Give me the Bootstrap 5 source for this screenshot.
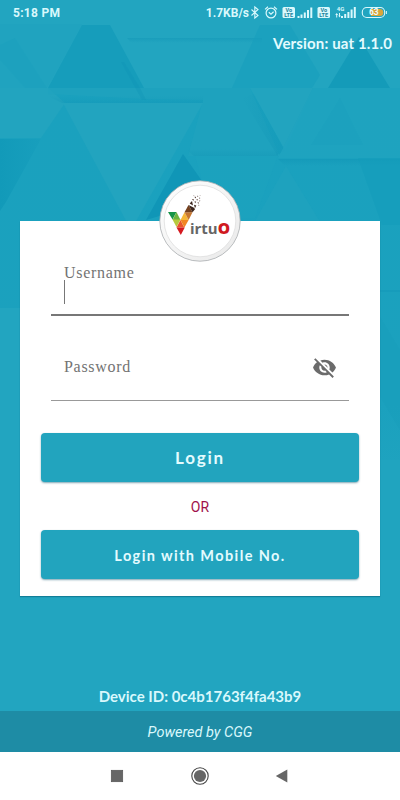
<!DOCTYPE html>
<html lang="en">
<head>
  <meta charset="UTF-8">
  <meta name="viewport" content="width=device-width, initial-scale=1">
  <title>VirtuO - Login</title>
  <link href="https://cdn.jsdelivr.net/npm/bootstrap@5.3.3/dist/css/bootstrap.min.css" rel="stylesheet">
  <style>
    body {
      font-family: Lato, "Open Sans", sans-serif;
      background: #23a5c0;
    }
    .screen {
      width: 400px;
      height: 800px;
      background: #22a5c0;
    }
    .backdrop { z-index: 0; }
    .screen > :not(.backdrop) { z-index: 1; }
    .statusbar {
      height: 25px;
      padding: 0 12px 0 13px;
      font: 700 12px/26px Roboto, sans-serif;
      color: #d9f8fc;
    }
    .clock { letter-spacing: .3px; }
    .net-speed { margin-right: -1px; letter-spacing: 0; }
    .status-icons { width: 140px; height: 25px; }
    .version {
      height: 37px;
      padding-right: 8px;
      font-size: 15px;
      font-weight: 700;
      line-height: 37px;
      color: #e4fbfe;
    }
    .version span { letter-spacing: .15px; }
    .login-card {
      margin: 159px 20px 0;
      width: 360px;
      height: 375px;
      padding: 38px 21px 0 21px;
      box-shadow: 0 1px 1px rgba(0, 80, 105, .45);
    }
    .logo {
      width: 84px;
      height: 84px;
      top: -42px;
      left: 138px;
    }
    .field {
      margin: 0 10px;
      padding: 0 12px 0 13px;
      color: #737373;
      font-family: "Liberation Serif", serif;
      font-size: 16px;
    }
    .field-user {
      height: 57px;
      border-bottom: 2px solid #777;
    }
    .field-user label {
      display: block;
      height: 21px;
      line-height: 28px;
      letter-spacing: .7px;
    }
    .caret {
      width: 1px;
      height: 24px;
      background: #777;
    }
    .field-pass {
      height: 85px;
      padding-top: 19px;
      border-bottom: 1px solid #999;
    }
    .field-pass label {
      margin-top: -2px;
      letter-spacing: .7px;
    }
    .eye { width: 25px; height: 25px; }
    .btn-login {
      height: 49px;
      padding: 0;
      border: 0;
      border-radius: 4px;
      background: #22a4be;
      color: #e4fbfe;
      font-size: 17px;
      font-weight: 700;
      letter-spacing: 1.8px;
      box-shadow: 0 1px 2px rgba(0, 80, 105, .5);
    }
    .btn-login:hover { background: #1f97af; color: #fff; }
    .btn-mobile { padding-top: 2px; font-size: 14.5px; letter-spacing: 1.4px; }
    .or-text {
      height: 48px;
      line-height: 51px;
      font-family: Roboto, sans-serif;
      font-size: 14px;
      color: #a0114b;
    }
    .device {
      height: 29px;
      font-size: 15px;
      font-weight: 700;
      line-height: 29px;
      color: #d9f8fc;
    }
    .powered {
      height: 41px;
      line-height: 43px;
      background: #1e8ca5;
      color: #d9f8fc;
      font-family: Roboto, sans-serif;
      font-size: 14.5px;
    }
    .sysnav { height: 48px; }
  </style>
</head>
<body>

  <main class="screen d-flex flex-column position-relative overflow-hidden">

    <!-- Triangle pattern -->
    <svg class="backdrop position-absolute top-0 start-0" width="400" height="800" viewBox="0 0 400 800" aria-hidden="true">
      <defs>
        <linearGradient id="fadeDown" x1="0" y1="0" x2="0" y2="1">
          <stop offset="0" stop-color="#1aa1be"/>
          <stop offset=".7" stop-color="#1ba1be"/>
          <stop offset="1" stop-color="#22a5c0"/>
        </linearGradient>
        <linearGradient id="shade" x1="0" y1="0" x2="0" y2="1">
          <stop offset="0" stop-color="#0b8fb2" stop-opacity=".35"/>
          <stop offset="1" stop-color="#0b8fb2" stop-opacity="0"/>
        </linearGradient>
        <linearGradient id="shadeUp" x1="0" y1="1" x2="0" y2="0">
          <stop offset="0" stop-color="#0b8fb2" stop-opacity=".25"/>
          <stop offset="1" stop-color="#0b8fb2" stop-opacity="0"/>
        </linearGradient>
        <linearGradient id="shadeSide" x1="1" y1="0" x2="0" y2="0">
          <stop offset="0" stop-color="#0b8fb2" stop-opacity=".3"/>
          <stop offset="1" stop-color="#0b8fb2" stop-opacity="0"/>
        </linearGradient>
        <linearGradient id="darkLeft" x1="0" y1="0" x2="1" y2="0">
          <stop offset="0" stop-color="#129ab9"/>
          <stop offset="1" stop-color="#189fbd"/>
        </linearGradient>
      </defs>
      <path d="M0 88H400V540L340 460H0Z" fill="url(#fadeDown)"/>
      <path d="M0 24H82L47 88H0Z" fill="#20a3bf"/>
      <path d="M15 38L47 88H25L0 60V45Z" fill="#189fbd" opacity=".3"/>
      <path d="M82 25H110L144 88H48Z" fill="#169dbb"/>
      <path d="M127 38H262V43H131Z" fill="url(#shade)"/>
      <path d="M260 25H290L320 75L312 88H232Z" fill="#189fbd" opacity=".6"/>
      <path d="M359 37L390 88H328Z" fill="#149bb9"/>
      <path d="M0 88H48L65 103L41 138H0Z" fill="#22a4bf"/>
      <path d="M48 88H250L280 156H188L203 100L144 99L48 94Z" fill="#20a3bf" opacity=".65"/>
      <path d="M48 96H203V103H62Z" fill="url(#shadeUp)"/>
      <path d="M63 103H203L131 230Z" fill="#22a4bf"/>
      <path d="M0 139H41L6 202L0 211Z" fill="url(#darkLeft)"/>
      <path d="M183 154L202 181L166 214L146 220Z" fill="#1096b7"/>
      <path d="M250 88H313L285 150Z" fill="#22a4bf"/>
      <path d="M254 94L285 151L277 155L242 98Z" fill="url(#shadeSide)"/>
      <path d="M313 88H400V158H278Z" fill="#20a3bf" opacity=".85"/>
      <path d="M340 98L363 145H311Z" fill="#1ba1be" opacity=".55"/>
      <path d="M186 149H278V156H194Z" fill="url(#shadeUp)"/>
      <path d="M278 159H400V166H285Z" fill="url(#shade)"/>
      <path d="M277 158L255 218H238L202 181L195 156H277Z" fill="#20a3bf" opacity=".35"/>
      <path d="M286 166L325 230H250Z" fill="#20a3bf" opacity=".65"/>
      <path d="M358 158H400V225H382Z" fill="#149dbb" opacity=".6"/>
      <path d="M124 62L140 88L146 100H142L121 62Z" fill="#0b8fb2" opacity=".25"/>
      <path d="M0 308H24V620H0Z" fill="#22a5c0"/>
      <path d="M376 290H400V292H376Z" fill="#0b8fb2" opacity=".25"/>
      <path d="M376 310L400 350V430L376 390Z" fill="#169dbb" opacity=".3"/>
      <path d="M376 460H400V560H376Z" fill="#20a4bf"/>
    </svg>

    <!-- Status bar -->
    <div class="statusbar d-flex position-relative">
      <span class="clock">5:18 PM</span>
      <span class="net-speed ms-auto">1.7KB/s</span>
      <svg class="status-icons flex-shrink-0" viewBox="248 0 140 25" fill="none" stroke="#d9f8fc">
        <path d="M251.5 9.5L258 15.5L254.8 18V7L258 9.5L251.5 15.5" stroke-width="1.1"/>
        <circle cx="271" cy="13" r="4.9" stroke-width="1.2"/>
        <path d="M265 9.4L268 6.8M277 9.4L274 6.8M268.8 12.2L271 14.2L273.6 11.8" stroke-width="1.2"/>
        <g fill="#d9f8fc" stroke="none">
          <rect x="282.5" y="7" width="12.5" height="11" rx="1.5"/>
          <rect x="317.5" y="7" width="12.5" height="11" rx="1.5"/>
          <path d="M297.5 16h2v2h-2zM300.5 14.5h2V18h-2zM303.8 12.5h2V18h-2zM307 10h2v8h-2zM310.3 7.5h2V18h-2z"/>
          <path d="M341 16h2v2h-2zM344.2 14h2v4h-2zM347.4 12h2v6h-2zM350.6 9.5h2V18h-2zM353.8 7h2v11h-2z"/>
          <path d="M335.2 15L336.7 13L338.2 15H337.2V17.5H336.2V15ZM338.3 15.5H339V13H340V15.5H340.8L339.6 17.5Z"/>
        </g>
        <g fill="#18829c" stroke="none" font-family="Roboto, sans-serif" font-weight="700" font-size="5.5" text-anchor="middle">
          <text x="288.7" y="12.2">Vo</text>
          <text x="288.7" y="17.2">LTE</text>
          <text x="323.7" y="12.2">Vo</text>
          <text x="323.7" y="17.2">LTE</text>
          <text x="340.5" y="10.5" font-size="6" fill="#d9f8fc">4G</text>
        </g>
        <rect x="362.3" y="7.5" width="22.4" height="10" rx="4.5" stroke-width="1.1"/>
        <path d="M371 9H380Q383.3 9 383.3 12.5T380 16H371Z" fill="#dba53b" stroke="none"/>
        <path d="M386.4 11V14" stroke-width="1"/>
        <text x="373.8" y="15.4" fill="#effcfd" stroke="none" font-family="Roboto, sans-serif" font-weight="700" font-size="8.5" text-anchor="middle">63</text>
      </svg>
    </div>

    <div class="version text-end position-relative"><span>Version: uat 1.1.0</span></div>

    <!-- Login form -->
    <form class="login-card bg-white position-relative" onsubmit="return false">
      <svg class="logo position-absolute" viewBox="158 179 84 84" aria-label="VirtuO">
        <defs>
          <linearGradient id="ring" x1="0" y1="0" x2="1" y2="1">
            <stop offset="0" stop-color="#fff"/>
            <stop offset="1" stop-color="#e9e9e9"/>
          </linearGradient>
        </defs>
        <circle cx="200" cy="221" r="40.2" fill="url(#ring)" stroke="#a9adb0" stroke-width=".8"/>
        <circle cx="200" cy="221" r="35.8" fill="#fff" stroke="#dedede" stroke-width=".8"/>
        <path d="M168 212H176.5L172.5 219.5Z" fill="#169447"/>
        <path d="M176.5 212L180.5 220H172.5Z" fill="#6cb43e"/>
        <path d="M172.5 219.5H180.5L176.5 227Z" fill="#b6c93d"/>
        <path d="M180.5 220L184.3 227.5H176.5Z" fill="#e8562a"/>
        <path d="M176.5 227.5H184.8L180.8 235Z" fill="#d51920"/>
        <path d="M180.5 220L184.5 212.2L188.6 220Z" fill="#f6b638"/>
        <path d="M180.5 220H188.6L184.4 227.5Z" fill="#f18523"/>
        <path d="M184.5 212.2H192.5L188.6 220Z" fill="#c77730"/>
        <path d="M184.5 212.2L188.5 205L192.5 212.2Z" fill="#75411f"/>
        <path d="M188.5 205L193 207.2L195.2 209L192.5 212.2Z" fill="#3b251d"/>
        <path d="M189.7 203.4L192 201L193 205.4Z" fill="#3b251d"/>
        <path d="M194 204.8L196.3 205.5L195 208.2Z" fill="#3b251d"/>
        <g fill="#493029">
          <path d="M191.8 199.4l1.8-.5.2 1.8zM194.4 201.4l1.8.2-1 1.7zM194.4 197l1.5-.2.1 1.6zM196.5 199l1.5.5-1 1.3zM197.5 202.3l1.4.2-.7 1.5zM197 195.7l1.3.2-.5 1.1zM199.2 197.5l1.1.4-.7 1zM199.2 200.5l1.1.1-.5 1.2zM198.4 204.8l1 .1-.6 1.1zM193.3 195.5l.9-.1v1zM199.6 195.2l.8.1-.3.8z"/>
        </g>
        <!-- One run of text, so the O sits right after the u -->
        <text x="190" y="234.3" font-family="'Open Sans', sans-serif" font-weight="700" font-size="15" fill="#666" textLength="40" lengthAdjust="spacingAndGlyphs">irtu<tspan font-size="15.5" font-weight="800" fill="#d01920">O</tspan></text>
      </svg>

      <div class="field field-user">
        <label>Username</label>
        <div class="caret"></div>
      </div>

      <div class="field field-pass d-flex align-items-center justify-content-between">
        <label>Password</label>
        <svg class="eye" viewBox="0 0 24 24" fill="#6b6b6b">
          <path d="M12 7c2.76 0 5 2.24 5 5 0 .65-.13 1.26-.36 1.83l2.92 2.92c1.51-1.26 2.7-2.89 3.43-4.75-1.73-4.39-6-7.5-11-7.5-1.4 0-2.74.25-3.98.7l2.16 2.16C10.74 7.13 11.35 7 12 7zM2 4.27l2.28 2.28.46.46C3.08 8.3 1.78 10.02 1 12c1.73 4.39 6 7.5 11 7.5 1.55 0 3.03-.3 4.38-.84l.42.42L19.73 22 21 20.73 3.27 3 2 4.27zM7.53 9.8l1.55 1.55c-.05.21-.08.43-.08.65 0 1.66 1.34 3 3 3 .22 0 .44-.03.65-.08l1.55 1.55c-.67.33-1.41.53-2.2.53-2.76 0-5-2.24-5-5 0-.79.2-1.53.53-2.2zm4.31-.78l3.15 3.15.02-.16c0-1.66-1.34-3-3-3l-.17.01z"/>
        </svg>
      </div>

      <div class="login-actions pt-2 mt-4">
        <button type="button" class="btn btn-login w-100">Login</button>
        <div class="or-text text-center">OR</div>
        <button type="button" class="btn btn-login btn-mobile w-100">Login with Mobile No.</button>
      </div>
    </form>

    <div class="device text-center position-relative mt-auto">Device ID: 0c4b1763f4fa43b9</div>
    <div class="powered text-center fst-italic position-relative">Powered by CGG</div>

    <!-- System navigation -->
    <div class="sysnav bg-white position-relative">
      <svg width="400" height="48" viewBox="0 0 400 48" fill="#666">
        <rect x="111.3" y="18.3" width="11.4" height="11.4" stroke="#555" stroke-width=".7"/>
        <circle cx="200" cy="24" r="8.2" fill="none" stroke="#444" stroke-width="1.1"/>
        <circle cx="200" cy="24" r="6.1"/>
        <path d="M275.8 24L287.3 17.5V30.5Z"/>
      </svg>
    </div>
  </main>

  <script src="https://cdn.jsdelivr.net/npm/bootstrap@5.3.3/dist/js/bootstrap.bundle.min.js"></script>
</body>
</html>
